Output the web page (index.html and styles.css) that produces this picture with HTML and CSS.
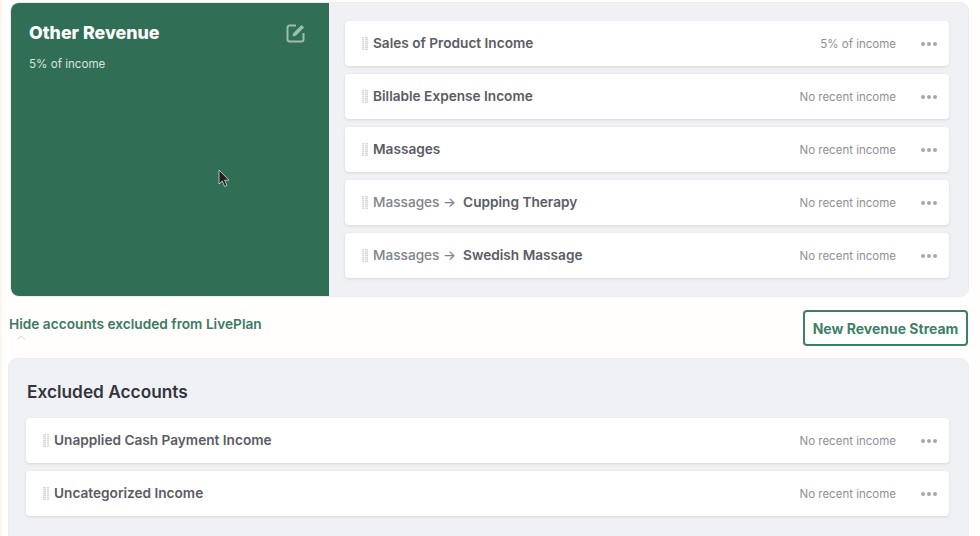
FILE: index.html
```html
<!DOCTYPE html>
<html lang="en">
<head>
<meta charset="utf-8">
<title>Revenue streams</title>
<link rel="stylesheet" href="styles.css">
</head>
<body>
<main class="page">
  <section class="stream">
    <aside class="stream-card">
      <div class="stream-head">
        <h2>Other Revenue</h2>
        <svg class="edit" viewBox="0 0 20 20" width="20" height="20" fill="none" stroke="#9dbdaf" stroke-width="2"><path d="M10 2.500H3.500a2 2 0 0 0-2 2V16.500a2 2 0 0 0 2 2H15.500a2 2 0 0 0 2-2V10"/><path d="M6.500 13.500l.7-3.300L15.500 1.900l2.600 2.600-8.300 8.300z" fill="#9dbdaf" stroke="none"/></svg>
      </div>
      <p>5% of income</p>
      <svg class="cursor" viewBox="0 0 12 19" width="12" height="19"><path d="M1 1v14l3.300-3 2.300 5.500 2.300-1-2.300-5.300H11z" fill="#222" stroke="#e8efec" stroke-width=".7"/></svg>
    </aside>
    <div class="rows">
      <div class="row"><span class="grip"></span><span class="name">Sales of Product Income</span><span class="note">5% of income</span><span class="more"><i></i><i></i><i></i></span></div>
      <div class="row"><span class="grip"></span><span class="name">Billable Expense Income</span><span class="note">No recent income</span><span class="more"><i></i><i></i><i></i></span></div>
      <div class="row"><span class="grip"></span><span class="name">Massages</span><span class="note">No recent income</span><span class="more"><i></i><i></i><i></i></span></div>
      <div class="row"><span class="grip"></span><span class="parent">Massages →</span><span class="name">Cupping Therapy</span><span class="note">No recent income</span><span class="more"><i></i><i></i><i></i></span></div>
      <div class="row"><span class="grip"></span><span class="parent">Massages →</span><span class="name">Swedish Massage</span><span class="note">No recent income</span><span class="more"><i></i><i></i><i></i></span></div>
    </div>
  </section>
  <div class="actions">
    <div class="toggle">
      <span>Hide accounts excluded from LivePlan</span>
      <svg class="chev" viewBox="0 0 10 5" width="10" height="5" fill="none" stroke="#d5d6da" stroke-width="1"><path d="M1 4.500l4-3.500 4 3.500"/></svg>
    </div>
    <button class="new" type="button">New Revenue Stream</button>
  </div>
  <section class="excluded">
    <h3>Excluded Accounts</h3>
    <div class="row"><span class="grip"></span><span class="name">Unapplied Cash Payment Income</span><span class="note">No recent income</span><span class="more"><i></i><i></i><i></i></span></div>
    <div class="row"><span class="grip"></span><span class="name">Uncategorized Income</span><span class="note">No recent income</span><span class="more"><i></i><i></i><i></i></span></div>
  </section>
</main>
</body>
</html>
```
FILE: styles.css
```css
* { box-sizing: border-box; }
html, body { margin: 0; height: 100%; }
body {
  background: #fffefd;
  font-family: "Inter", "Liberation Sans", sans-serif;
  overflow: hidden;
}
.page {
  width: 980px;
  height: 536px;
  padding: 3px 12px 0 8px;
  overflow: hidden;
  border-left: 2px solid #fff6ee;
}
.stream {
  display: flex;
  height: 293px;
  border-radius: 8px;
  overflow: hidden;
  background: #f0f1f5;
  box-shadow: 0 0 0 1px #e9ebee;
  margin-left: 1px;
}
.stream-card {
  position: relative;
  flex: 0 0 318px;
  background: #306f56;
  color: #fff;
  padding: 18px 18px;
}
.stream-head { display: flex; justify-content: space-between; align-items: flex-start; }
.stream-card h2 { margin: 0; font-size: 17.800px; line-height: 24px; font-weight: 800; }
.edit { margin: 2px 5px 0 0; }
.stream-card p { margin: 11px 0 0; font-size: 11.600px; line-height: 16px; color: #d6e4dd; }
.cursor { position: absolute; left: 207px; top: 166px; }
.rows {
  flex: 1;
  padding: 18px 19px 0 16px;
  display: flex;
  flex-direction: column;
  gap: 8px;
}
.row {
  display: flex;
  align-items: center;
  height: 45px;
  flex: none;
  background: #fff;
  border-radius: 4px;
  padding: 0 12px 0 17px;
  box-shadow: 0 1px 3px rgba(60, 65, 80, .14);
}
.grip {
  width: 6px;
  height: 13px;
  margin-right: 5px;
  background-image: linear-gradient(90deg, transparent 2.500px, #fff 2.500px, #fff 3.500px, transparent 3.500px), linear-gradient(#d6d7da 50%, #eeeff0 50%);
  background-size: 100% 100%, 100% 2px;
}
.name { font-size: 13.650px; font-weight: 600; color: #5a5c64; line-height: 18px; margin-top: -1px; }
.parent { font-size: 13.650px; font-weight: 500; color: #82848c; margin-right: 7px; line-height: 18px; margin-top: -1px; }
.note { margin-left: auto; font-size: 11.500px; color: #8e9097; }
.more { display: flex; gap: 2px; margin-left: 25px; width: 16px; }
.more i { width: 4px; height: 4px; border-radius: 50%; background: #a5a7ad; }
.actions {
  display: flex;
  justify-content: space-between;
  height: 63px;
  padding-top: 14px;
}
.toggle { display: flex; flex-direction: column; align-items: flex-start; font-size: 13.700px; font-weight: 600; color: #3b7a62; margin: 4px 0 0 -1px; }
.toggle span { line-height: 20px; }
.chev { margin: 1px 0 0 7px; }
.new {
  align-self: flex-start;
  width: 165px;
  height: 36px;
  border: 2px solid #3f7f67;
  border-radius: 4px;
  background: #fff;
  color: #3f7f67;
  font: 700 14px "Inter", "Liberation Sans", sans-serif;
  padding: 0;
}
.excluded {
  height: 190px;
  margin-left: -1px;
  background: #f0f1f5;
  border-radius: 8px;
  padding: 0 19px 0 17px;
  display: flex;
  flex-direction: column;
  gap: 8px;
  box-shadow: 0 0 0 1px #ecedf1;
}
.excluded h3 { margin: 21px 0 6px 1px; font-size: 17.300px; line-height: 24px; font-weight: 600; color: #33353d; }
```
